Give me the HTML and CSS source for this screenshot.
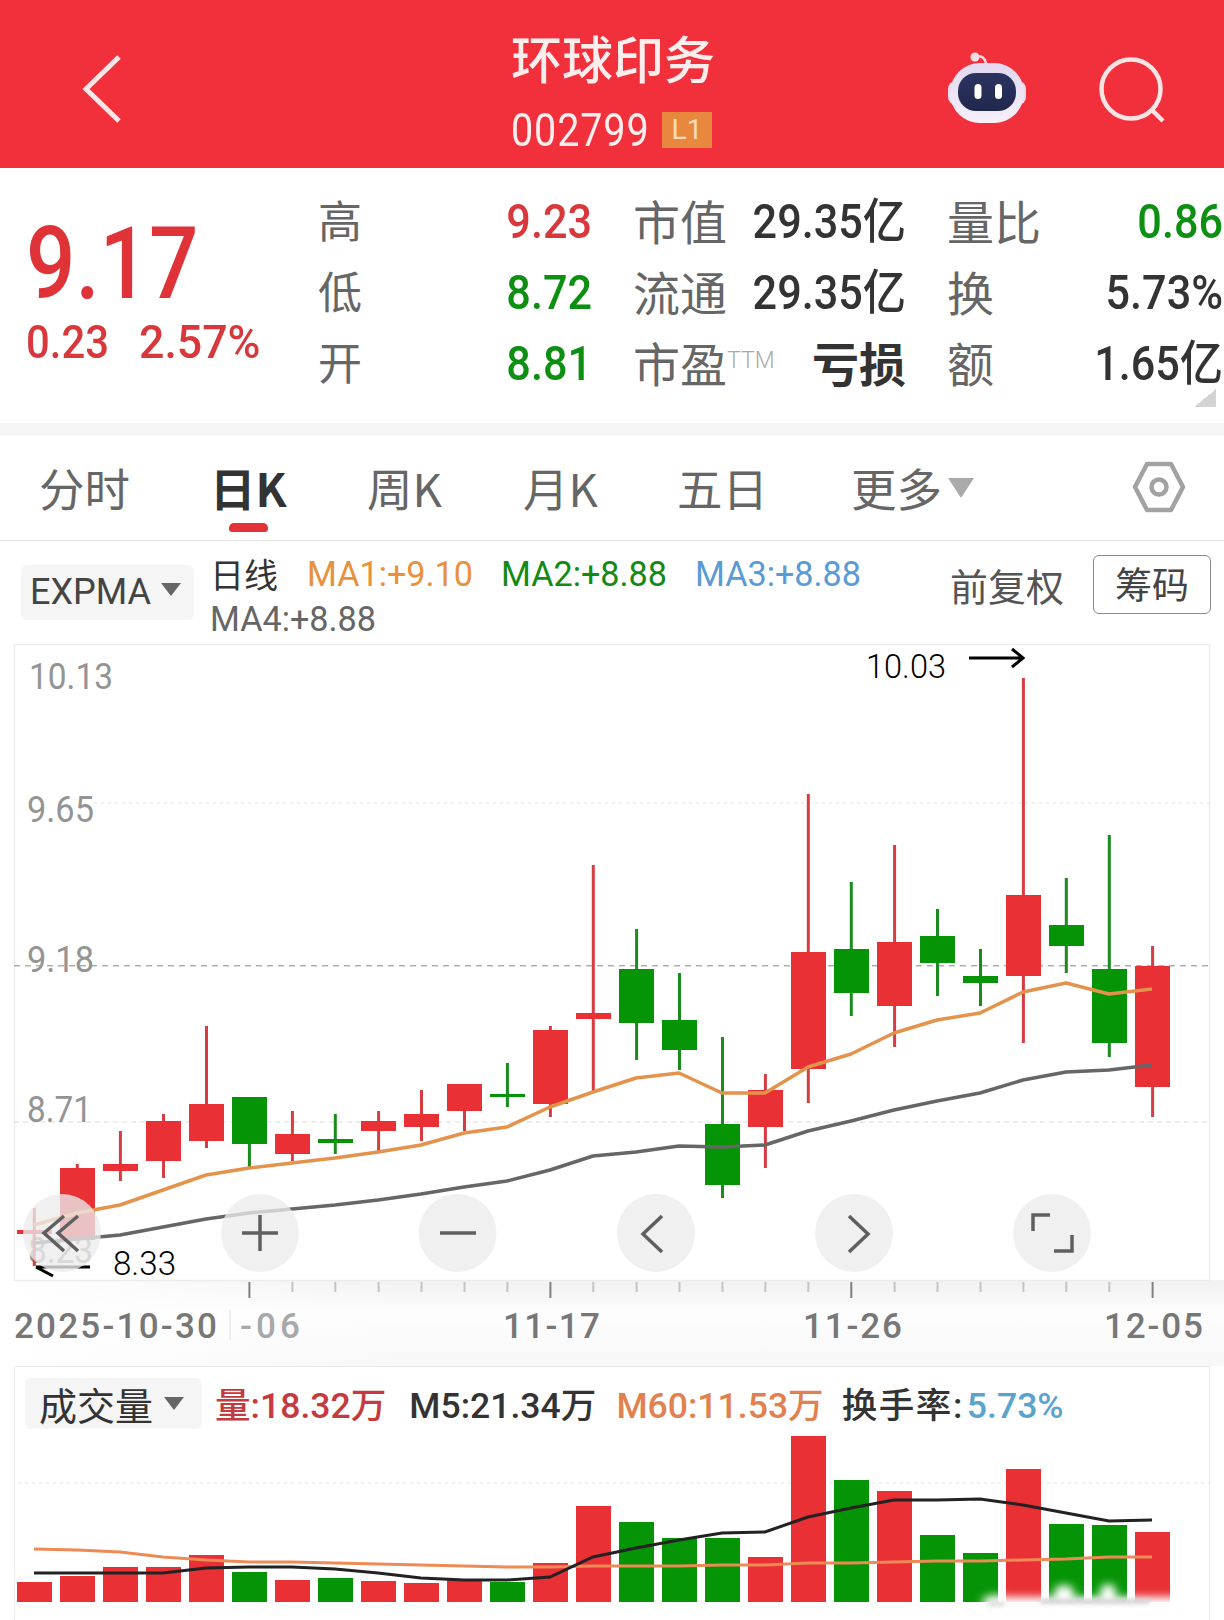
FILE: index.html
```html
<!DOCTYPE html>
<html lang="zh-CN">
<head>
<meta charset="utf-8">
<title>环球印务</title>
<link rel="stylesheet" href="styles.css">
</head>
<body>
<header class="topbar">
  <div class="bar-left">
    <svg class="icon-back" viewBox="0 0 40 68" width="40" height="68"><path d="M37 2 4 34l33 32"/></svg>
  </div>
  <div class="bar-title">
    <div class="stock-name">环球印务</div>
    <div class="stock-code"><span class="code-num">002799</span><span class="badge">L1</span></div>
  </div>
  <div class="bar-actions">
    <svg class="icon-robot" viewBox="0 0 80 74" width="80" height="74">
      <defs>
        <linearGradient id="headfill" x1="0" y1="0" x2="0" y2="1"><stop offset="0" stop-color="#e2d8f0"/><stop offset="1" stop-color="#f6f0fa"/></linearGradient>
        <linearGradient id="visorfill" x1="0" y1="0" x2="0" y2="1"><stop offset="0" stop-color="#2b3460"/><stop offset="1" stop-color="#20284f"/></linearGradient>
      </defs>
      <path class="antenna" d="M29 7c5-2 9 1 10 6"/>
      <circle class="antenna-tip" cx="28" cy="7" r="4.500"/>
      <rect class="ear" x="1" y="31" width="78" height="24" rx="8"/>
      <rect class="head" x="3" y="13" width="74" height="60" rx="30" fill="url(#headfill)"/>
      <rect class="visor" x="11" y="23" width="58" height="38" rx="18" fill="url(#visorfill)"/>
      <rect class="eye" x="27.500" y="34" width="7" height="15" rx="3.500"/>
      <rect class="eye" x="48" y="34" width="7" height="15" rx="3.500"/>
    </svg>
    <svg class="icon-search" viewBox="0 0 66 74" width="66" height="74"><circle cx="32" cy="32" r="29.500"/><path d="m52 52 12 12"/></svg>
  </div>
</header>

<section class="quote">
  <div class="price-box">
    <div class="last-price">9.17</div>
    <div class="price-change"><span class="chg-a">0.23</span><span class="chg-b">2.57%</span></div>
  </div>
  <div class="stats">
    <span class="k">高</span><span class="v up-c">9.23</span>
    <span class="k">市值</span><span class="v">29.35亿</span>
    <span class="k">量比</span><span class="v dn-c">0.86</span>
    <span class="k">低</span><span class="v dn-c">8.72</span>
    <span class="k">流通</span><span class="v">29.35亿</span>
    <span class="k">换</span><span class="v">5.73%</span>
    <span class="k">开</span><span class="v dn-c">8.81</span>
    <span class="k">市盈<sup class="ttm">TTM</sup></span><span class="v loss">亏损</span>
    <span class="k">额</span><span class="v">1.65亿</span>
  </div>
  <span class="corner"></span>
</section>

<nav class="tabs">
  <a class="tab t1">分时</a>
  <a class="tab t2 active">日K</a>
  <a class="tab t3">周K</a>
  <a class="tab t4">月K</a>
  <a class="tab t5">五日</a>
  <a class="tab t6">更多<i class="tri tri-tab"></i></a>
  <svg class="icon-hex" viewBox="0 0 54 52" width="54" height="52"><path d="M15 3h24l12 23-12 23H15L3 26z"/><circle cx="27" cy="26" r="7.500"/></svg>
</nav>

<div class="indicator">
  <div class="select expma">EXPMA<i class="tri tri-sel"></i></div>
  <div class="ma-list">
    <span class="line-name">日线</span>
    <span class="ma c-or">MA1:+9.10</span>
    <span class="ma c-gr">MA2:+8.88</span>
    <span class="ma c-bl">MA3:+8.88</span>
    <span class="ma c-gy ma4">MA4:+8.88</span>
  </div>
  <div class="fq">前复权</div>
  <div class="chip">筹码</div>
</div>

<svg class="kline" viewBox="0 644 1224 722" width="1224" height="722">
  <defs>
    <linearGradient id="axisbg" x1="0" y1="0" x2="0" y2="1">
      <stop offset="0" stop-color="#f1f1f1"/><stop offset=".4" stop-color="#fdfdfd"/><stop offset="1" stop-color="#f7f7f7"/>
    </linearGradient>
    <linearGradient id="axisfade" x1="0" y1="0" x2="1" y2="0">
      <stop offset="0" stop-color="#fff"/><stop offset="1" stop-color="#fff" stop-opacity="0"/>
    </linearGradient>
  </defs>
  <rect x="0" y="1280" width="1224" height="86" fill="url(#axisbg)"/>
  <rect x="0" y="1280" width="420" height="86" fill="url(#axisfade)"/>
  <rect class="frame" x="14.500" y="644.500" width="1195" height="636"/>
  <path class="grid-dot" d="M94 803H1210"/>
  <path class="grid-last" d="M14 965.700H1210"/>
  <path class="grid-dash" d="M14 1122H1210"/>

  <text class="axis" x="29" y="689" textLength="84" lengthAdjust="spacingAndGlyphs">10.13</text>
  <text class="axis" x="27" y="822" textLength="67" lengthAdjust="spacingAndGlyphs">9.65</text>
  <text class="axis" x="27" y="972" textLength="67" lengthAdjust="spacingAndGlyphs">9.18</text>
  <text class="axis" x="27" y="1122" textLength="65" lengthAdjust="spacingAndGlyphs">8.71</text>
  <text class="axis" x="28" y="1263" textLength="65" lengthAdjust="spacingAndGlyphs">8.23</text>

  <g class="candle up"><path d="M34.300 1208V1266"/><rect x="17" y="1230" height="4"/></g>
  <g class="candle up"><path d="M77.300 1164V1240"/><rect x="60" y="1168" height="72"/></g>
  <g class="candle up"><path d="M120.400 1131V1181"/><rect x="103" y="1164" height="7"/></g>
  <g class="candle up"><path d="M163.500 1114V1178"/><rect x="146" y="1121" height="40"/></g>
  <g class="candle up"><path d="M206.500 1026V1148"/><rect x="189" y="1104" height="37"/></g>
  <g class="candle dn"><path d="M249.400 1143V1168"/><rect x="232" y="1097" height="47"/></g>
  <g class="candle up"><path d="M292.400 1111V1161"/><rect x="275" y="1134" height="20"/></g>
  <g class="candle dn"><path d="M335.300 1114V1154"/><rect x="318" y="1139" height="4"/></g>
  <g class="candle up"><path d="M378.600 1111V1152"/><rect x="361" y="1121" height="10"/></g>
  <g class="candle up"><path d="M421.500 1090V1141"/><rect x="404" y="1114" height="13"/></g>
  <g class="candle up"><path d="M464.500 1084V1131"/><rect x="447" y="1084" height="27"/></g>
  <g class="candle dn"><path d="M507.400 1063V1107"/><rect x="490" y="1094" height="3"/></g>
  <g class="candle up"><path d="M550.400 1026V1117"/><rect x="533" y="1030" height="74"/></g>
  <g class="candle up"><path d="M593.300 865V1093"/><rect x="576" y="1013" height="6"/></g>
  <g class="candle dn"><path d="M636.600 929V1060"/><rect x="619" y="969" height="54"/></g>
  <g class="candle dn"><path d="M679.500 973V1070"/><rect x="662" y="1020" height="30"/></g>
  <g class="candle dn"><path d="M722.500 1037V1198"/><rect x="705" y="1124" height="61"/></g>
  <g class="candle up"><path d="M765.400 1074V1168"/><rect x="748" y="1090" height="37"/></g>
  <g class="candle up"><path d="M808.300 794V1103"/><rect x="791" y="952" height="117"/></g>
  <g class="candle dn"><path d="M851.300 882V1016"/><rect x="834" y="949" height="44"/></g>
  <g class="candle up"><path d="M894.600 845V1047"/><rect x="877" y="942" height="64"/></g>
  <g class="candle dn"><path d="M937.500 909V996"/><rect x="920" y="936" height="27"/></g>
  <g class="candle dn"><path d="M980.500 949V1006"/><rect x="963" y="976" height="7"/></g>
  <g class="candle up"><path d="M1023.400 678V1043"/><rect x="1006" y="895" height="81"/></g>
  <g class="candle dn"><path d="M1066.300 878V973"/><rect x="1049" y="925" height="21"/></g>
  <g class="candle dn"><path d="M1109.300 835V1057"/><rect x="1092" y="969" height="74"/></g>
  <g class="candle up"><path d="M1152.600 946V1117"/><rect x="1135" y="966" height="121"/></g>

  <polyline class="ma-line ma-or" points="34,1225 77,1213 120,1205 163,1190 206,1175 249,1168 292,1163 335,1158 378,1152 421,1145 464,1133 507,1127 550,1107 593,1092 636,1078 679,1073 722,1093 765,1093 808,1067 851,1054 894,1033 937,1020 980,1013 1023,992 1066,983 1109,994 1152,989"/>
  <polyline class="ma-line ma-gy" points="34,1243 77,1239 120,1235 163,1227 206,1219 249,1213 292,1209 335,1205 378,1200 421,1194 464,1187 507,1181 550,1170 593,1156 636,1152 679,1146 722,1147 765,1145 808,1131 851,1121 894,1110 937,1101 980,1093 1023,1080 1066,1072 1109,1070 1152,1065"/>

  <text class="note" x="866" y="678" textLength="80" lengthAdjust="spacingAndGlyphs">10.03</text>
  <path class="note-arrow" d="M969 658H1023M1012 649l11 9-11 9"/>
  <text class="note" x="113" y="1275" textLength="63" lengthAdjust="spacingAndGlyphs">8.33</text>
  <path class="note-arrow" d="M90 1267H36M36 1267l17 9"/>

  <g class="ctrl"><circle cx="62" cy="1233" r="39"/><path d="M64 1216 44 1233l20 18M78 1216 58 1233l20 18"/></g>
  <g class="ctrl"><circle cx="260" cy="1233" r="39"/><path d="M242 1233H278M260 1215V1251"/></g>
  <g class="ctrl"><circle cx="457.500" cy="1233" r="39"/><path d="M440 1233H476"/></g>
  <g class="ctrl"><circle cx="656" cy="1233" r="39"/><path d="M662 1216 643 1234l19 18"/></g>
  <g class="ctrl"><circle cx="854" cy="1233" r="39"/><path d="M849 1216l19 18-19 18"/></g>
  <g class="ctrl"><circle cx="1052" cy="1233" r="39"/><path d="M1033 1231V1215H1050M1072 1235V1251H1054"/></g>

  <path class="tick" d="M292.400 1282v10M335.300 1282v10M378.600 1282v10M421.500 1282v10M464.500 1282v10M507.400 1282v10M593.300 1282v10M636.600 1282v10M679.500 1282v10M722.500 1282v10M765.400 1282v10M808.300 1282v10M894.600 1282v10M937.500 1282v10M980.500 1282v10M1023.400 1282v10M1066.300 1282v10M1109.300 1282v10"/>
  <path class="tick major" d="M249.400 1282v16M550.400 1282v16M851.300 1282v16M1152.600 1282v16"/>

  <path class="axis-sep" d="M230 1310V1340"/>
  <text class="date" x="14" y="1338" textLength="203">2025-10-30</text>
  <text class="date faded" x="240" y="1338" textLength="60">-06</text>
  <text class="date" x="503" y="1338" textLength="97">11-17</text>
  <text class="date" x="803" y="1338" textLength="99">11-26</text>
  <text class="date" x="1104" y="1338" textLength="99">12-05</text>
</svg>

<section class="volume">
  <div class="vol-legend">
    <div class="select vol-sel">成交量<i class="tri tri-vol"></i></div>
    <span class="c-red l1">量:18.32万</span>
    <span class="c-dark l2">M5:21.34万</span>
    <span class="c-orange l3">M60:11.53万</span>
    <span class="c-dark l4">换手率:<span class="c-sky">5.73%</span></span>
  </div>
  <svg class="vol-chart" viewBox="0 1431 1224 185" width="1224" height="185">
    <defs><filter id="soft" x="-20%" y="-60%" width="140%" height="220%"><feGaussianBlur stdDeviation="4"/></filter><filter id="soft2" x="-20%" y="-80%" width="140%" height="260%"><feGaussianBlur stdDeviation="2"/></filter></defs>
    <path class="grid-dot" d="M18 1483H1210"/>
    <g class="bars">
      <rect class="b-up" x="17" y="1582" height="20"/>
      <rect class="b-up" x="60" y="1576" height="26"/>
      <rect class="b-up" x="103" y="1567" height="35"/>
      <rect class="b-up" x="146" y="1567" height="35"/>
      <rect class="b-up" x="189" y="1555" height="47"/>
      <rect class="b-dn" x="232" y="1572" height="30"/>
      <rect class="b-up" x="275" y="1580" height="22"/>
      <rect class="b-dn" x="318" y="1578" height="24"/>
      <rect class="b-up" x="361" y="1581" height="21"/>
      <rect class="b-up" x="404" y="1583" height="19"/>
      <rect class="b-up" x="447" y="1580" height="22"/>
      <rect class="b-dn" x="490" y="1582" height="20"/>
      <rect class="b-up" x="533" y="1563" height="39"/>
      <rect class="b-up" x="576" y="1506" height="96"/>
      <rect class="b-dn" x="619" y="1522" height="80"/>
      <rect class="b-dn" x="662" y="1538" height="64"/>
      <rect class="b-dn" x="705" y="1538" height="64"/>
      <rect class="b-up" x="748" y="1557" height="45"/>
      <rect class="b-up" x="791" y="1436" height="166"/>
      <rect class="b-dn" x="834" y="1480" height="122"/>
      <rect class="b-up" x="877" y="1491" height="111"/>
      <rect class="b-dn" x="920" y="1535" height="67"/>
      <rect class="b-dn" x="963" y="1553" height="49"/>
      <rect class="b-up" x="1006" y="1469" height="133"/>
      <rect class="b-dn" x="1049" y="1524" height="78"/>
      <rect class="b-dn" x="1092" y="1525" height="77"/>
      <rect class="b-up" x="1135" y="1532" height="70"/>
    </g>
    <polyline class="vol-line v-or" points="34,1549 77,1550 120,1552 163,1557 206,1560 249,1562 292,1562 335,1563 378,1564 421,1565 464,1566 507,1567 550,1567 593,1566 636,1566 679,1566 722,1565 765,1565 808,1563 851,1563 894,1562 937,1561 980,1561 1023,1560 1066,1559 1109,1557 1152,1557"/>
    <polyline class="vol-line v-bk" points="34,1573 77,1573 120,1573 163,1573 206,1568 249,1567 292,1567 335,1569 378,1573 421,1578 464,1580 507,1580 550,1577 593,1557 636,1548 679,1540 722,1533 765,1532 808,1517 851,1508 894,1500 937,1500 980,1499 1023,1505 1066,1513 1109,1521 1152,1520"/>
    <g filter="url(#soft)" class="wm">
      <rect x="990" y="1597" width="205" height="14"/>
      <ellipse cx="996" cy="1602" rx="14" ry="7"/>
      <ellipse cx="1064" cy="1592" rx="10" ry="7"/>
      <ellipse cx="1108" cy="1592" rx="8" ry="8"/>
      <ellipse cx="1196" cy="1585" rx="6" ry="10"/>
    </g>
    <g filter="url(#soft2)" class="wm-ink">
      <rect x="1040" y="1599" width="110" height="5"/>
      <ellipse cx="996" cy="1604" rx="10" ry="2"/>
    </g>
  </svg>
</section>
</body>
</html>
```

FILE: styles.css
```css
:root {
  --cjk: "Noto Sans CJK SC", sans-serif;
  --num: "Roboto", "Noto Sans CJK SC", sans-serif;
  --red: #e93034;
  --green: #059405;
}
* { box-sizing: border-box; }
html, body { margin: 0; padding: 0; background: #fff; }
body { width: 1224px; height: 1620px; overflow: hidden; font-family: var(--cjk); color: #333; }

/* top bar */
.topbar { display: flex; height: 168px; background: #f2303c; color: #fdeeee; }
.bar-left { width: 511px; padding: 55px 0 0 82px; }
.icon-back path { fill: none; stroke: #fde6e6; stroke-width: 5; }
.bar-title { width: 201px; padding-top: 26px; }
.stock-name { font-size: 51px; line-height: 62px; font-weight: 500; white-space: nowrap; }
.stock-code { display: flex; justify-content: space-between; align-items: center; margin-top: 24px; height: 36px; }
.code-num { width: 150px; font-family: var(--num); font-size: 46px; line-height: 36px; letter-spacing: 1px; transform: scaleX(.86); transform-origin: left center; white-space: nowrap; }
.badge { width: 50px; height: 36px; background: #e8883f; color: #fbdcb8; font: 28px/36px var(--num); text-align: center; }
.bar-actions { display: flex; padding: 52px 0 0 235px; gap: 72px; }
.icon-robot { margin-top: -2px; }
.antenna { fill: none; stroke: #f6d9df; stroke-width: 2.500; }
.antenna-tip { fill: #f8dde2; }
.ear { fill: #ecdbe9; }
.eye { fill: #fff; }
.icon-search { margin-top: 5px; }
.icon-search circle, .icon-search path { fill: none; stroke: #ffe4e4; stroke-width: 4.500; }

/* quote */
.quote { position: relative; display: flex; height: 255px; padding: 18px 0 0 26px; }
.price-box { width: 292px; color: #e03338; }
.last-price { font-family: var(--num); font-size: 100px; line-height: 72px; margin-top: 42px; font-weight: 500; transform: scaleX(.87); transform-origin: left center; }
.price-change { display: flex; gap: 20px; font-family: var(--num); font-size: 47px; font-weight: 500; line-height: 50px; margin-top: 17px; color: #d8383c; }
.chg-a { transform: scaleX(.89); transform-origin: left center; }
.chg-b { transform: scaleX(.95); transform-origin: left center; }
.stats { display: grid; grid-template-columns: 60px 214px 142px 172px 142px 175px; grid-auto-rows: 71px; width: 905px; }
.stats .k { font-size: 44px; line-height: 67px; color: #666; white-space: nowrap; }
.stats .k:nth-child(6n+3), .stats .k:nth-child(6n+5) { margin-left: 41px; font-size: 47px; }
.stats .v { font-family: var(--num); font-size: 48px; font-weight: 500; line-height: 71px; text-align: right; white-space: nowrap; color: #333; transform: scaleX(.9); transform-origin: right center; }
.stats .up-c { color: #d8383c; }
.stats .dn-c { color: #0d8f12; }
.stats .loss { font-family: var(--cjk); font-size: 47px; font-weight: 700; line-height: 67px; transform: none; }
.ttm { font-family: var(--num); font-size: 23px; font-weight: 300; color: #aaa; vertical-align: 14px; line-height: 0; }
.corner { position: absolute; right: 8px; bottom: 16px; width: 22px; height: 18px; background: linear-gradient(to bottom right, transparent 50%, #d4d4d4 50%); }

/* tabs */
.tabs { position: relative; display: flex; align-items: center; height: 118px; margin: 0; padding-top: 12px; background: #fff; border-top: 12px solid #f5f5f5; border-bottom: 1px solid #e6e6e6; }
.tab { position: absolute; top: 27px; font-size: 45.500px; line-height: 50px; color: #666; white-space: nowrap; }
.t1 { left: 39px; } .t2 { left: 210px; } .t3 { left: 367px; } .t4 { left: 523px; } .t5 { left: 677px; } .t6 { left: 851px; }
.tab.active { color: #333; font-weight: 700; }
.tab.active::after { content: ""; position: absolute; left: 19px; top: 61px; width: 39px; height: 9px; border-radius: 5px 5px 3px 3px; background: #e33338; }
.tri { display: inline-block; width: 0; height: 0; border-style: solid; border-color: #aaa transparent transparent; }
.tri-tab { border-width: 20px 13px 0; margin-left: 6px; vertical-align: 9px; }
.icon-hex { position: absolute; left: 1132px; top: 26px; }
.icon-hex path, .icon-hex circle { fill: none; stroke: #a2a2a2; stroke-width: 4.500; stroke-linejoin: round; }

/* indicator row */
.indicator { display: flex; align-items: flex-start; height: 103px; padding-left: 21px; }
.select { display: flex; align-items: center; background: #f5f5f5; border-radius: 6px; white-space: nowrap; }
.expma { width: 173px; height: 55px; margin-top: 24px; padding-left: 9px; font: 36px/55px var(--num); color: #444; }
.tri-sel { border-width: 13px 10px 0; border-top-color: #666; margin-left: 10px; margin-top: -6px; }
.ma-list { display: flex; flex-wrap: wrap; align-content: flex-start; width: 740px; margin: 11px 0 0 16px; column-gap: 28px; font-family: var(--num); font-size: 34.200px; line-height: 44px; }
.line-name { font-family: var(--cjk); font-size: 34px; color: #333; margin-right: 1px; }
.ma { white-space: nowrap; }
.ma4 { flex-basis: 100%; margin-top: 1px; }
.c-or { color: #e8913c; } .c-gr { color: #128a14; } .c-bl { color: #5b9bd5; } .c-gy { color: #666; }
.fq { width: 143px; margin-top: 17px; font-size: 38px; line-height: 54px; color: #555; white-space: nowrap; }
.chip { width: 118px; height: 59px; margin-top: 14px; border: 1px solid #8a8a8a; border-radius: 6px; font-size: 37px; line-height: 55px; text-align: center; color: #444; }

/* chart */
.kline, .vol-chart { display: block; }
.frame { fill: #fff; stroke: #ececec; stroke-width: 1.500; }
.grid-dot { stroke: #e2e2e2; stroke-width: 1; stroke-dasharray: 3 4; }
.grid-dash { stroke: #dcdcdc; stroke-width: 1; stroke-dasharray: 5 4; }
.grid-last { stroke: #b0b0b0; stroke-width: 1.500; stroke-dasharray: 6 5; }
.axis { font-family: var(--num); font-size: 36.500px; fill: #949494; }
.candle rect { width: 35px; }
.candle path { stroke-width: 3; fill: none; }
.candle.up rect { fill: var(--red); }
.candle.up path { stroke: #d73c42; }
.candle.dn rect { fill: var(--green); }
.candle.dn path { stroke: #1a8c1e; }
.ma-line { fill: none; stroke-width: 3.500; stroke-linejoin: round; }
.ma-or { stroke: #e3934b; }
.ma-gy { stroke: #666; }
.note { font-family: "Roboto", sans-serif; font-size: 33px; font-weight: 300; fill: #000; }
.note-arrow { fill: none; stroke: #000; stroke-width: 3; }
.ctrl circle { fill: #ececec; fill-opacity: .78; }
.ctrl path { fill: none; stroke: #5f5f5f; stroke-width: 3.500; }
.tick { stroke: #c4c4c4; stroke-width: 2; }
.tick.major { stroke: #808080; }
.axis-sep { stroke: #eee; stroke-width: 2; }
.date { font-family: "Roboto", sans-serif; font-size: 35px; font-weight: 500; fill: #777; }
.date.faded { fill: #a8a8a8; }

/* volume */
.volume { border-top: 1px solid #e8e8e8; background: #fff; height: 254px; margin: 0 14px; width: 1196px; border-left: 1px solid #ececec; border-right: 1px solid #ececec; }
.vol-legend { display: flex; align-items: center; height: 64px; padding-left: 10px; font-family: "Roboto", "Noto Sans CJK SC", sans-serif; font-size: 35.600px; font-weight: 500; white-space: nowrap; }
.vol-sel { width: 177px; height: 51px; padding-left: 14px; font-size: 38px; font-weight: 400; color: #333; font-family: var(--cjk); margin-top: 8px; }
.tri-vol { border-width: 13px 10px 0; border-top-color: #666; margin-left: 11px; }
.l1, .l2, .l3, .l4 { margin-top: 6px; }
.l1 { margin-left: 13px; } .l2 { margin-left: 23px; } .l3 { margin-left: 20px; } .l4 { margin-left: 18px; letter-spacing: 1.500px; }
.c-red { color: #c43a3e; } .c-dark { color: #333; } .c-orange { color: #e0814f; } .c-sky { color: #59a3cd; margin-left: 3px; letter-spacing: 0; }
.vol-chart { margin-left: -15px; }
.bars rect { width: 35px; }
.b-up { fill: var(--red); }
.b-dn { fill: var(--green); }
.vol-line { fill: none; stroke-width: 3; }
.v-or { stroke: #ee8a55; }
.v-bk { stroke: #222; }
.wm rect, .wm ellipse { fill: #fff; }
.wm-ink rect, .wm-ink ellipse { fill: #d2d2d2; }
```
